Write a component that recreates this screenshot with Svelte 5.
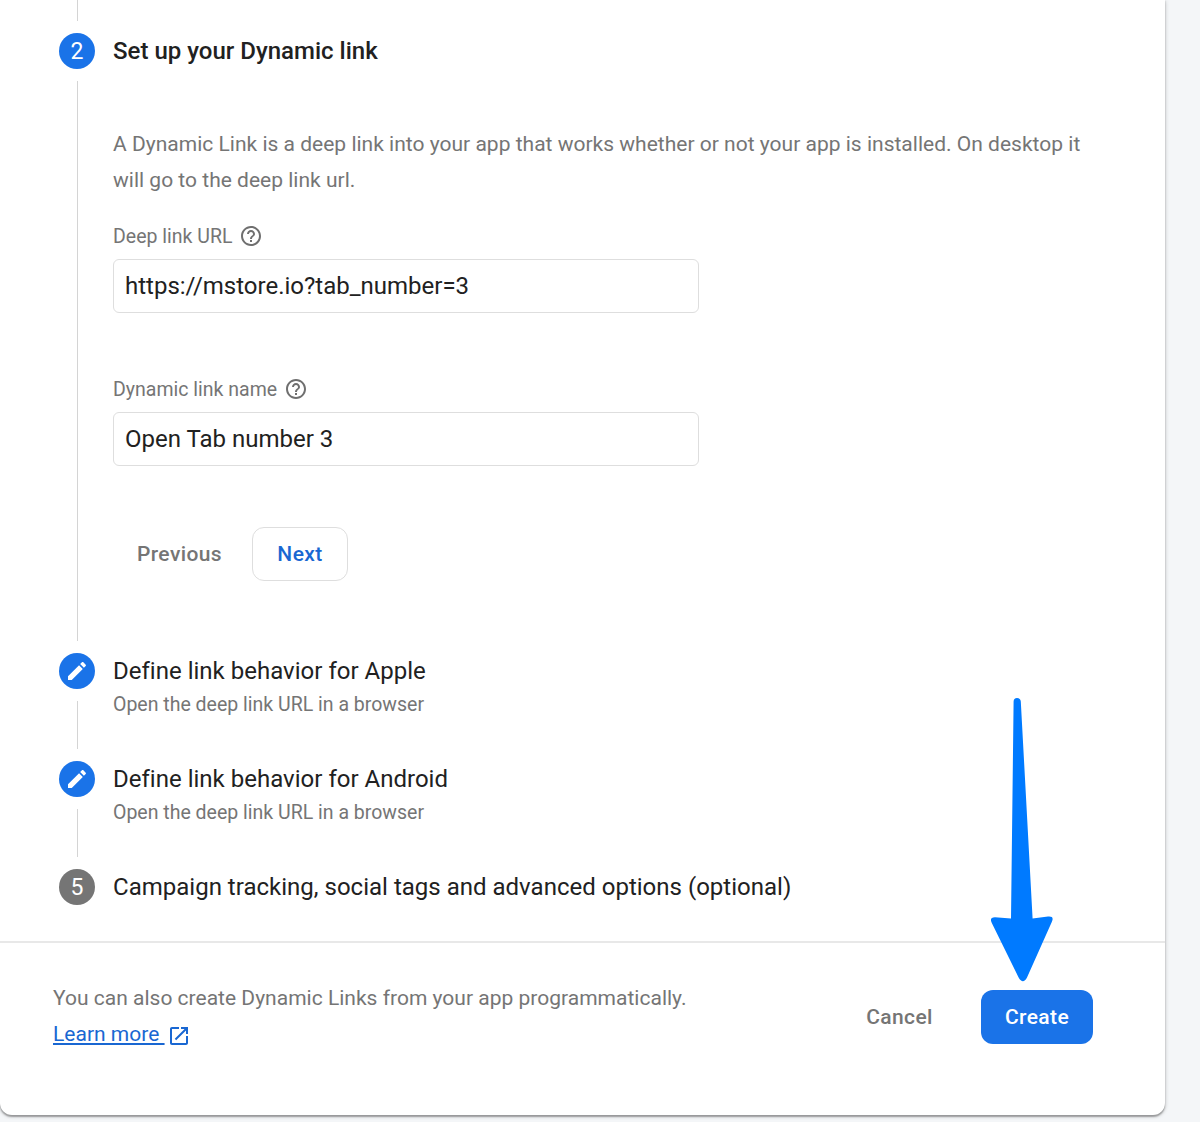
<script>
  let url = $state('https://mstore.io?tab_number=3');
  let name = $state('Open Tab number 3');
</script>

{#snippet help()}
  <svg class="help" viewBox="0 0 24 24" aria-hidden="true">
    <path d="M11 18h2v-2h-2v2zm1-16C6.48 2 2 6.48 2 12s4.48 10 10 10 10-4.48 10-10S17.52 2 12 2zm0 18c-4.41 0-8-3.59-8-8s3.59-8 8-8 8 3.59 8 8-3.59 8-8 8zm0-14c-2.21 0-4 1.79-4 4h2c0-1.1.9-2 2-2s2 .9 2 2c0 2-3 1.75-3 5h2c0-2.25 3-2.5 3-5 0-2.21-1.79-4-4-4z" />
  </svg>
{/snippet}

{#snippet pencil()}
  <svg class="pencil" viewBox="0 0 24 24" aria-hidden="true">
    <path d="M3 17.25V21h3.75L17.81 9.94l-3.75-3.75L3 17.25zM20.71 7.04c.39-.39.39-1.02 0-1.41l-2.34-2.34c-.39-.39-1.02-.39-1.41 0l-1.83 1.83 3.75 3.75 1.83-1.83z" />
  </svg>
{/snippet}

<div class="page">
<main class="card">
  <div class="steps">
    <div class="step tail"><div class="rail"><span class="line"></span></div></div>

    <section class="step setup">
      <div class="rail"><span class="badge">2</span><span class="line"></span></div>
      <div class="body">
        <h2 class="title active">Set up your Dynamic link</h2>
        <p class="desc">A Dynamic Link is a deep link into your app that works whether or not your app is installed. On desktop it<br />will go to the deep link url.</p>
        <label class="label" for="url"><span>Deep link URL</span>{@render help()}</label>
        <input class="input" id="url" bind:value={url} />
        <label class="label second" for="name"><span>Dynamic link name</span>{@render help()}</label>
        <input class="input" id="name" bind:value={name} />
        <div class="actions">
          <button class="btn plain prev">Previous</button>
          <button class="btn outlined">Next</button>
        </div>
      </div>
    </section>

    <section class="step short">
      <div class="rail"><span class="badge">{@render pencil()}</span><span class="line"></span></div>
      <div class="body">
        <h2 class="title">Define link behavior for Apple</h2>
        <p class="sub">Open the deep link URL in a browser</p>
      </div>
    </section>

    <section class="step short">
      <div class="rail"><span class="badge">{@render pencil()}</span><span class="line"></span></div>
      <div class="body">
        <h2 class="title">Define link behavior for Android</h2>
        <p class="sub">Open the deep link URL in a browser</p>
      </div>
    </section>

    <section class="step">
      <div class="rail"><span class="badge muted">5</span></div>
      <div class="body"><h2 class="title">Campaign tracking, social tags and advanced options (optional)</h2></div>
    </section>
  </div>

  <footer class="footer">
    <div class="note">
      You can also create Dynamic Links from your app programmatically.
      <a class="more" href="#learn"><span class="more-text">Learn more&nbsp;</span><svg class="ext" viewBox="0 0 24 24" aria-hidden="true"><path d="M19 19H5V5h7V3H5c-1.11 0-2 .9-2 2v14c0 1.1.89 2 2 2h14c1.1 0 2-.9 2-2v-7h-2v7zM14 3v2h3.59l-9.83 9.83 1.41 1.41L19 6.41V10h2V3h-7z" /></svg></a>
    </div>
    <div class="final">
      <button class="btn plain cancel">Cancel</button>
      <button class="btn primary">Create</button>
    </div>
  </footer>

  <svg class="arrow" viewBox="0 0 64 286" aria-hidden="true">
    <path d="M23.6 5.5Q23.7 2 27 2Q30.500 2 30.800 5.500L42.600 222.600L58 220.600Q64.300 220 62 225.400L37 281.500Q33 289 28.600 281.500L1.800 227Q-1 221.500 5 221.300L21 222.600Z" />
  </svg>
</main>
</div>

<style>
  :global(body) {
    background: #f4f6f8;
  }
  .page {
    height: 1122px;
    overflow: hidden;
    background: #f4f6f8;
  }
  .card {
    position: relative;
    box-sizing: border-box;
    width: 1165px;
    height: 1115px;
    background: #fff;
    border-radius: 0 0 12px 12px;
    box-shadow: 0 1.5px 1.5px rgba(0, 0, 0, 0.28), 0 1px 4px rgba(0, 0, 0, 0.24);
    font-family: Roboto, sans-serif;
    color: #212121;
  }
  .steps {
    box-sizing: border-box;
    height: 941px;
    padding-left: 59px;
  }
  .step {
    display: flex;
    gap: 18px;
  }
  .tail { height: 33px; }
  .setup { height: 619.7px; }
  .short { height: 108.3px; }
  .rail {
    display: flex;
    flex-direction: column;
    align-items: center;
    width: 36px;
  }
  .line {
    flex: 1;
    width: 1px;
    margin: 12px 0;
    background: #d4d4d4;
  }
  .tail .line { margin-top: 0; }
  .badge {
    display: flex;
    align-items: center;
    justify-content: center;
    width: 36px;
    height: 36px;
    border-radius: 50%;
    background: #1a73e8;
    color: #fff;
    font-size: 23px;
  }
  .muted { background: #757575; }
  .pencil { width: 24px; height: 24px; fill: #fff; }
  .title {
    margin: 0;
    font-size: 24px;
    font-weight: 400;
    line-height: 37px;
    white-space: nowrap;
    letter-spacing: 0.01px;
  }
  .active { font-weight: 500; }
  .sub {
    margin: 1px 0 0;
    font-size: 19.5px;
    line-height: 28px;
    color: #757575;
  }
  .desc {
    margin: 56px 0 26px;
    font-size: 21px;
    line-height: 36px;
    color: #757575;
    white-space: nowrap;
    letter-spacing: 0.01px;
  }
  .label {
    display: flex;
    align-items: center;
    gap: 6.5px;
    height: 24px;
    margin-bottom: 11px;
    font-size: 19.5px;
    color: #757575;
  }
  .second { margin-top: 64px; }
  .help { width: 24px; height: 24px; fill: #6f6f6f; }
  .input {
    display: block;
    box-sizing: border-box;
    width: 586px;
    height: 54px;
    padding: 0 11px;
    border: 1.5px solid #dedede;
    border-radius: 6px;
    outline: none;
    background: #fff;
    font: 400 24px Roboto, sans-serif;
    color: #212121;
  }
  .actions {
    display: flex;
    gap: 6px;
    margin-top: 61px;
  }
  .btn {
    box-sizing: border-box;
    height: 54px;
    padding: 0;
    border: 0;
    border-radius: 12px;
    background: transparent;
    font: 500 21px Roboto, sans-serif;
    letter-spacing: 0.4px;
  }
  .plain { color: #757575; }
  .prev { width: 133px; }
  .outlined {
    width: 96px;
    border: 1.5px solid #dedede;
    color: #1967d2;
  }
  .footer {
    display: flex;
    justify-content: space-between;
    padding: 37px 72px 0 53px;
    border-top: 2px solid #e8e8e8;
  }
  .note {
    width: 660px;
    font-size: 21px;
    line-height: 36px;
    color: #757575;
    letter-spacing: 0.01px;
  }
  .more {
    display: flex;
    align-items: center;
    color: #1967d2;
    text-decoration: none;
  }
  .more-text {
    text-decoration: underline;
    text-decoration-thickness: 1.5px;
    text-underline-offset: 2px;
  }
  .ext { width: 24px; height: 24px; margin-left: 2px; fill: #1967d2; transform: translateY(2px); }
  .final { display: flex; gap: 24px; padding-top: 10px; }
  .cancel { width: 115px; }
  .primary { width: 112px; background: #1a73e8; color: #fff; }
  .arrow {
    position: absolute;
    left: 990px;
    top: 696px;
    width: 64px;
    height: 286px;
    fill: #007aff;
  }
</style>
